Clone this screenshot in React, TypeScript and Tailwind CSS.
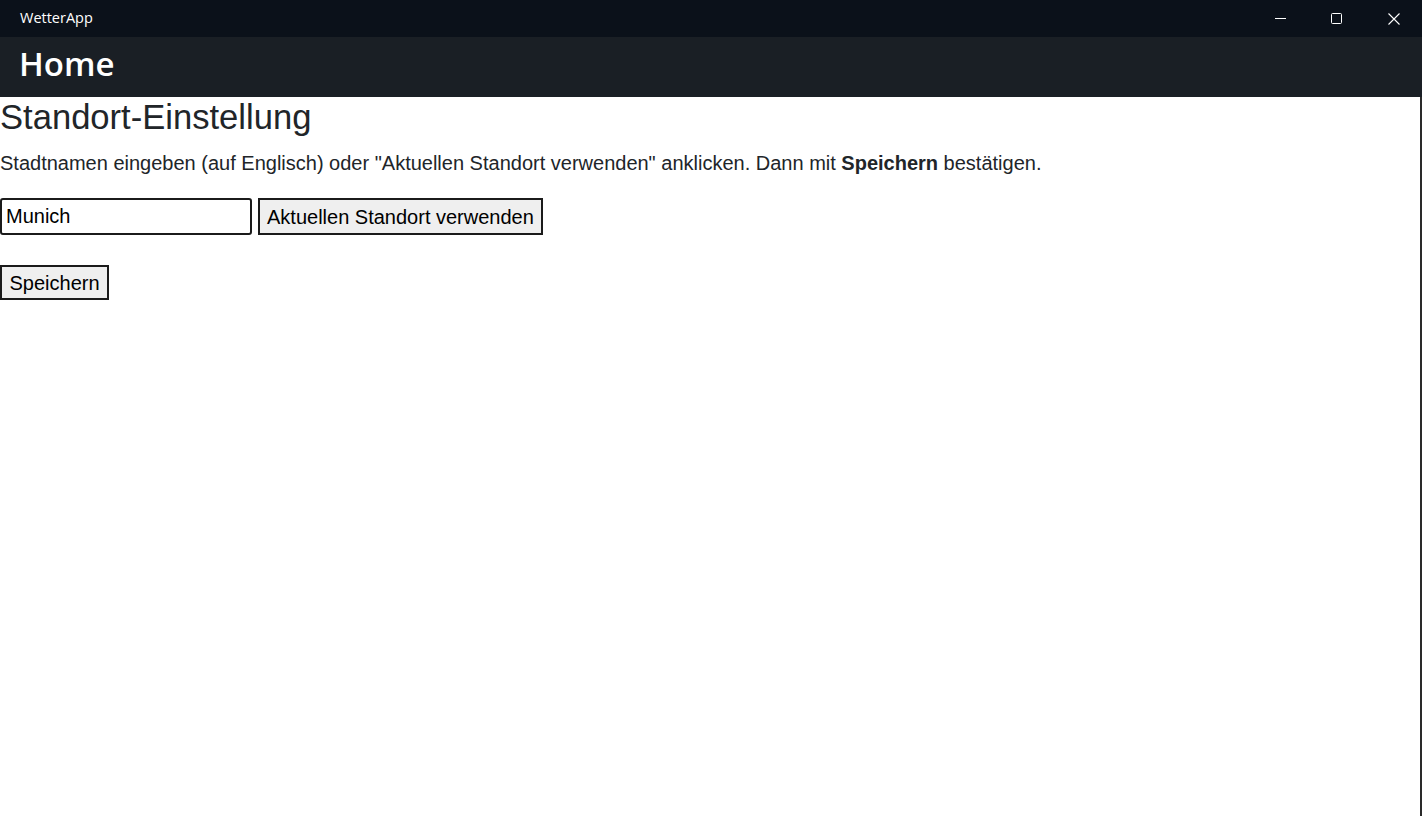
import React from "react";

export default function App() {
  return (
    <div className="w-[1422px] h-[816px] flex flex-col bg-white overflow-hidden font-['Liberation_Sans',Arial,sans-serif]">
      {/* Title bar */}
      <div className="h-[37px] flex items-center justify-between bg-[#0b111a] text-white shrink-0">
        <span className="pl-[20px] pb-[2px] text-[14.5px] font-['Open_Sans','Segoe_UI',sans-serif]">WetterApp</span>
        <div className="flex items-center h-full">
          <div className="w-[56px] h-full flex items-center justify-center">
            <svg width="11" height="11" viewBox="0 0 11 11"><path d="M0 5.5h11" stroke="white" strokeWidth="1" /></svg>
          </div>
          <div className="w-[57px] h-full flex items-center justify-center">
            <svg width="11" height="11" viewBox="0 0 11 11"><rect x="0.5" y="0.5" width="10" height="10" rx="1" fill="none" stroke="white" strokeWidth="1" /></svg>
          </div>
          <div className="w-[57px] h-full flex items-center justify-center">
            <svg width="12" height="12" viewBox="0 0 12 12"><path d="M0.5 0.5l11 11M11.5 0.5l-11 11" stroke="white" strokeWidth="1.1" /></svg>
          </div>
        </div>
      </div>
      {/* Header */}
      <div className="h-[60px] flex items-start bg-[#1a1f25] shrink-0">
        <h1 className="pl-[19px] pt-[7px] text-[33px] font-semibold text-white font-['Open_Sans','Segoe_UI',sans-serif] leading-[40px]">Home</h1>
      </div>
      {/* Content */}
      <div className="flex-1 flex border-r-2 border-[#2a2a2a]">
        <div className="flex flex-col items-start text-[#212529]">
          <h2 className="text-[34.6px] leading-[40px]">Standort-Einstellung</h2>
          <p className="text-[20px] leading-[30px] mt-[11px]">
            Stadtnamen eingeben (auf Englisch) oder "Aktuellen Standort verwenden" anklicken. Dann mit <b>Speichern</b> bestätigen.
          </p>
          <div className="flex items-center gap-[6px] mt-[20px]">
            <input
              defaultValue="Munich"
              className="w-[252px] h-[37px] px-[4px] border-2 border-[#1b1b1b] rounded-[3px] text-[20px] text-black outline-none"
            />
            <button className="h-[37px] px-[7px] border-2 border-[#1b1b1b] bg-[#efefef] text-[20px] text-black">
              Aktuellen Standort verwenden
            </button>
          </div>
          <button className="mt-[30px] h-[35px] px-[7.5px] border-2 border-[#1b1b1b] bg-[#efefef] text-[20px] text-black">
            Speichern
          </button>
        </div>
      </div>
    </div>
  );
}
